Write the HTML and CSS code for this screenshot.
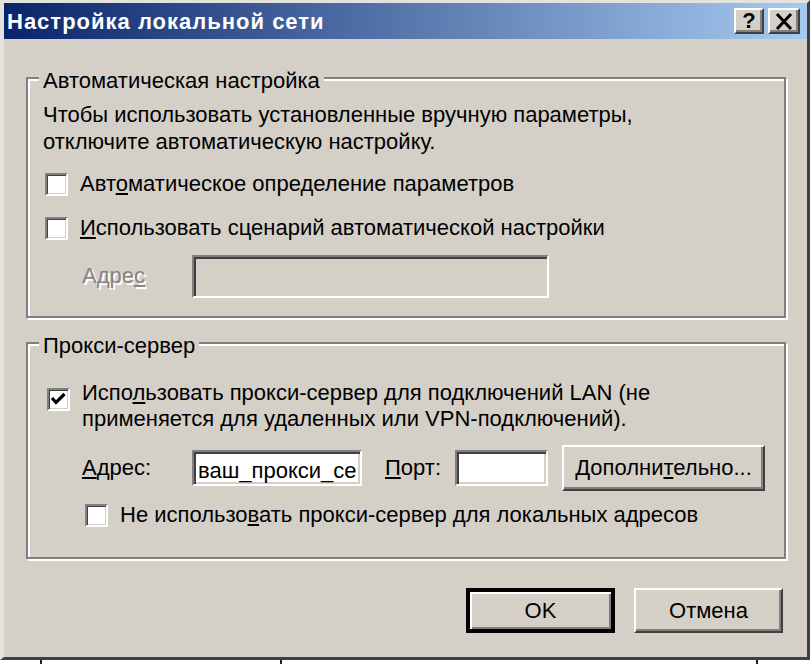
FILE: index.html
```html
<!DOCTYPE html>
<html lang="ru">
<head>
    <meta charset="UTF-8">
    <title>Настройка локальной сети</title>
    <link rel="stylesheet" href="styles.css">
</head>
<body>
    <div class="dialog">
        <div class="titlebar">
            <span class="title">Настройка локальной сети</span>
            <div class="title-btns">
                <span class="title-btn help">?</span>
                <span class="title-btn close">
                    <svg width="18" height="17" viewBox="0 0 18 17"><path d="M2 1 L16 16 M16 1 L2 16" stroke="#000" stroke-width="3"/></svg>
                </span>
            </div>
        </div>

        <fieldset class="group group-auto">
            <legend>Автоматическая настройка</legend>
            <p class="note">Чтобы использовать установленные вручную параметры,<br>отключите автоматическую настройку.</p>
            <div class="check-row row-first">
                <span class="box"></span>
                <span>Авт<u>о</u>матическое определение параметров</span>
            </div>
            <div class="check-row row-second">
                <span class="box"></span>
                <span><u>И</u>спользовать сценарий автоматической настройки</span>
            </div>
            <div class="addr-row addr-auto">
                <span class="addr-label disabled">Адре<u>с</u></span>
                <div class="field field-off field-wide"></div>
            </div>
        </fieldset>

        <fieldset class="group group-proxy">
            <legend>Прокси-сервер</legend>
            <div class="check-row proxy-row">
                <span class="box">
                    <svg width="19" height="19" viewBox="0 0 19 19"><path d="M3 8 L7 12.5 L15.5 4" fill="none" stroke="#000" stroke-width="3.2"/></svg>
                </span>
                <span>Испо<u>л</u>ьзовать прокси-сервер для подключений LAN (не<br>применяется для удаленных или VPN-подключений).</span>
            </div>
            <div class="addr-row addr-proxy">
                <span class="addr-label"><u>А</u>дрес:</span>
                <input class="field field-addr" type="text" value="ваш_прокси_сервер">
                <span class="port-label"><u>П</u>орт:</span>
                <input class="field field-port" type="text" value="">
                <button class="btn btn-more">Дополни<u>т</u>ельно...</button>
            </div>
            <div class="check-row bypass-row">
                <span class="box"></span>
                <span>Не использо<u>в</u>ать прокси-сервер для локальных адресов</span>
            </div>
        </fieldset>

        <div class="actions">
            <button class="btn btn-default">OK</button>
            <button class="btn">Отмена</button>
        </div>
    </div>
    <div class="under">
        <span class="seg seg-a"></span>
        <span class="seg seg-b"></span>
        <span class="seg seg-c"></span>
        <span class="seg seg-d"></span>
    </div>
</body>
</html>
```

FILE: styles.css
```css
* {
    box-sizing: border-box;
}
body {
    margin: 0;
    background: #fff;
    font-family: 'Liberation Sans', Arial, sans-serif;
    font-size: 22px;
    color: #000;
}
.dialog {
    width: 810px;
    height: 660px;
    display: flex;
    flex-direction: column;
    background: #d4d0c8;
    border-style: solid;
    border-width: 3px 3px 3px 4px;
    border-color: #e4e2dc #404040 #404040 #e4e2dc;
}

/* title bar */
.titlebar {
    flex: none;
    height: 36px;
    display: flex;
    align-items: center;
    justify-content: space-between;
    padding: 0 7px 0 3px;
    background: linear-gradient(to right, #0a246a, #a6caf0);
}
.title {
    color: #fff;
    font-weight: bold;
    font-size: 22px;
    letter-spacing: 1px;
    padding-top: 2px;
}
.title-btns {
    display: flex;
    gap: 4px;
}
.title-btn {
    height: 26px;
    display: flex;
    align-items: center;
    justify-content: center;
    background: #d4d0c8;
    border: 2px solid;
    border-color: #fff #404040 #404040 #fff;
    box-shadow: inset -2px -2px 0 #808080;
    font-weight: bold;
    font-size: 22px;
}
.help {
    width: 30px;
}
.close {
    width: 32px;
}

/* group boxes */
.group {
    margin: 0 21px 0 22px;
    min-width: 0;
    border: 2px solid #808080;
    box-shadow: inset 2px 2px 0 #fff, 2px 2px 0 #fff;
    padding: 8px 15px 18px;
}
.group legend {
    margin-left: -4px;
    padding: 6px 4px 0;
    line-height: 24px;
    background: #d4d0c8;
}
.group-auto {
    margin-top: 24px;
}
.group-proxy {
    margin-top: 10px;
    padding-bottom: 29px;
}
.note {
    margin: 0;
    line-height: 27px;
}
.check-row {
    display: flex;
    align-items: center;
    line-height: 26px;
}
.row-first {
    margin-top: 16px;
}
.row-second {
    margin-top: 18px;
}
.proxy-row {
    margin-top: 14px;
    align-items: flex-start;
}
.proxy-row .box {
    margin-top: 8px;
    margin-left: 4px;
}
.bypass-row {
    margin-top: 11px;
    padding-left: 40px;
}
.box {
    flex: none;
    width: 23px;
    height: 23px;
    margin-left: 2px;
    margin-right: 12px;
    background: #fff;
    border: 2px solid;
    border-color: #808080 #fff #fff #808080;
    box-shadow: inset 1px 1px 0 #404040, inset -1px -1px 0 #d4d0c8;
}
.box svg {
    display: block;
}

/* address rows */
.addr-row {
    display: flex;
    padding-left: 39px;
}
.addr-auto {
    margin-top: 14px;
    align-items: flex-start;
}
.addr-auto .addr-label {
    padding-top: 8px;
}
.addr-proxy {
    margin-top: 13px;
    align-items: center;
}
.addr-label {
    width: 110px;
    line-height: 26px;
}
.disabled {
    color: #858585;
    text-shadow: 2px 2px 0 #fff;
}
.field {
    border: 2px solid;
    border-color: #808080 #fff #fff #808080;
    box-shadow: inset 2px 2px 0 #404040, inset -2px -2px 0 #d4d0c8;
    background: #fff;
    font: inherit;
    color: #000;
    padding: 5px 4px 0;
    outline: none;
}
.field-off {
    background: #d4d0c8;
}
.field-wide {
    width: 357px;
    height: 43px;
}
.field-addr {
    width: 170px;
    height: 36px;
}
.port-label {
    width: 70px;
    margin-left: 23px;
}
.field-port {
    width: 93px;
    height: 36px;
}

/* buttons */
.btn {
    font: inherit;
    color: #000;
    background: #d4d0c8;
    border: 2px solid;
    border-color: #fff #404040 #404040 #fff;
    box-shadow: inset -2px -2px 0 #808080;
    padding: 0;
}
.btn-more {
    width: 203px;
    height: 46px;
    margin-left: 14px;
}
.actions {
    display: flex;
    justify-content: flex-end;
    gap: 19px;
    margin-top: 29px;
    padding-right: 24px;
}
.actions .btn {
    width: 149px;
    height: 45px;
}
.btn-default {
    outline: 2px solid #000;
    outline-offset: -2px;
    border-width: 4px;
    border-color: #000;
    box-shadow: inset 2px 2px 0 #fff, inset -2px -2px 0 #808080;
}

/* strip of the window below */
.under {
    height: 4px;
    display: flex;
}
.seg {
    border-left: 2px solid #222;
}
.seg-a {
    width: 40px;
    border-left: none;
}
.seg-b {
    width: 240px;
}
.seg-c {
    width: 476px;
}
.seg-d {
    width: 16px;
}
```
